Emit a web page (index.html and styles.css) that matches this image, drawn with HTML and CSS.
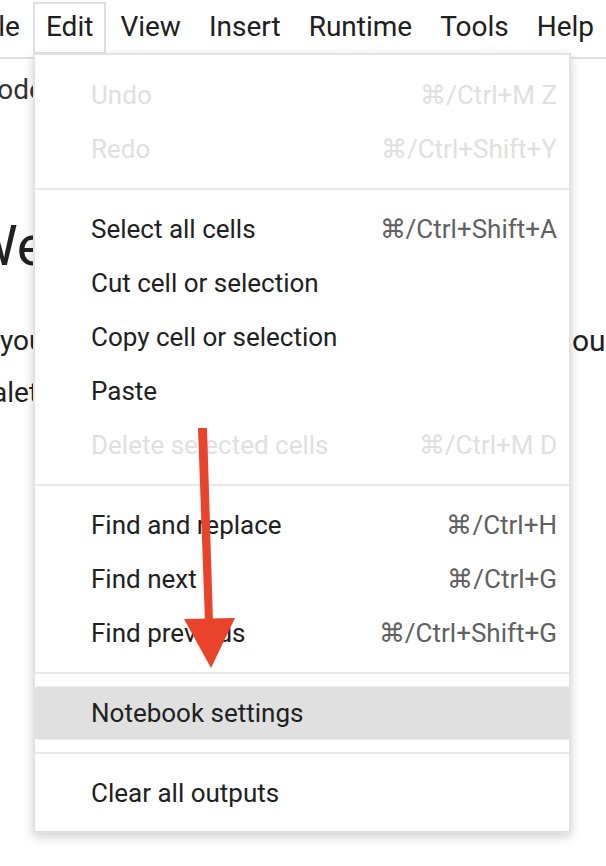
FILE: index.html
```html
<!DOCTYPE html>
<html>
<head>
<meta charset="utf-8">
<link rel="stylesheet" href="styles.css">
</head>
<body>
<div class="menubar">
  <div class="mitem m-file">File</div>
  <div class="mitem active">Edit</div>
  <div class="mitem">View</div>
  <div class="mitem">Insert</div>
  <div class="mitem">Runtime</div>
  <div class="mitem">Tools</div>
  <div class="mitem">Help</div>
</div>
<div class="page">
  <div class="toolbar"><span class="tb-btn">Code</span></div>
  <h1 class="title">Welcome to Colab</h1>
  <p class="line"><span class="l">you</span><span class="r">ou</span></p>
  <p class="line"><span class="l l2">alet</span></p>
</div>

<div class="dropdown">
  <div class="row disabled"><span>Undo</span><span class="sc">⌘/Ctrl+M Z</span></div>
  <div class="row disabled"><span>Redo</span><span class="sc">⌘/Ctrl+Shift+Y</span></div>
  <div class="sep"></div>
  <div class="row"><span>Select all cells</span><span class="sc">⌘/Ctrl+Shift+A</span></div>
  <div class="row"><span>Cut cell or selection</span></div>
  <div class="row"><span>Copy cell or selection</span></div>
  <div class="row"><span>Paste</span></div>
  <div class="row disabled"><span>Delete selected cells</span><span class="sc">⌘/Ctrl+M D</span></div>
  <div class="sep"></div>
  <div class="row"><span>Find and replace</span><span class="sc">⌘/Ctrl+H</span></div>
  <div class="row"><span>Find next</span><span class="sc">⌘/Ctrl+G</span></div>
  <div class="row"><span>Find previous</span><span class="sc">⌘/Ctrl+Shift+G</span></div>
  <div class="sep"></div>
  <div class="row hl"><span>Notebook settings</span></div>
  <div class="sep"></div>
  <div class="row"><span>Clear all outputs</span></div>
</div>

<svg class="arrow" width="606" height="866" viewBox="0 0 606 866">
  <polygon points="198,428 207,428 213,622 205,622" fill="#e9432b"/>
  <polygon points="184,619 235,618 211,668" fill="#e9432b"/>
</svg>
</body>
</html>
```

FILE: styles.css
```css
html, body {
  margin: 0;
  padding: 0;
  background: #fff;
  overflow: hidden;
  width: 606px;
  height: 866px;
  font-family: Roboto, "Noto Sans", sans-serif;
  color: #212121;
}

.menubar {
  display: flex;
  height: 55px;
  padding-top: 2px;
  margin-left: -32px;
  border-bottom: 2px solid #e0e0e0;
  font-size: 28px;
  color: #202020;
}

.mitem {
  line-height: 46px;
  height: 46px;
  padding: 0 12px 2px;
  border: 2px solid transparent;
  white-space: nowrap;
}

.m-file {
  padding: 0 11px 2px 6px;
}

.mitem.active {
  border-color: #e0e0e0;
  background: #fff;
  padding: 0 11px 2px;
}

.page {
  padding-top: 11px;
}

.toolbar {
  height: 40px;
  line-height: 40px;
  font-size: 28px;
  color: #333;
  margin-left: -21px;
}

.title {
  margin: 104px 0 37px -32px;
  font-size: 56px;
  line-height: 64px;
  font-weight: 400;
  color: #212121;
  white-space: nowrap;
}

.line {
  display: flex;
  margin: 0;
  font-size: 28px;
  line-height: 52px;
  color: #212121;
  white-space: nowrap;
}

.line .l {
  width: 572px;
  flex-shrink: 0;
}

.line .r {
  font-size: 30px;
}

.line .l2 {
  margin-left: -8px;
}

.dropdown {
  position: absolute;
  left: 33px;
  top: 53px;
  width: 538px;
  box-sizing: border-box;
  background: #fff;
  border: 2px solid #e2e2e2;
  box-shadow: 0 4px 10px rgba(0, 0, 0, 0.18);
  padding: 13px 0 11px;
  font-size: 26px;
}

.row {
  display: flex;
  justify-content: space-between;
  align-items: center;
  height: 54px;
  line-height: 54px;
  padding: 0 12px 0 56px;
  box-sizing: border-box;
  color: #212121;
  white-space: nowrap;
}

.row .sc {
  color: #616161;
}

.row.disabled,
.row.disabled .sc {
  color: #e0e0e0;
}

.row.hl {
  background: #e0e0e0;
  border-top: 1px dotted #fff;
  border-bottom: 1px dotted #fff;
  line-height: 52px;
}

.sep {
  height: 2px;
  background: #e8e8e8;
  margin: 12px 0;
}

.arrow {
  position: absolute;
  left: 0;
  top: 0;
  pointer-events: none;
}
```
